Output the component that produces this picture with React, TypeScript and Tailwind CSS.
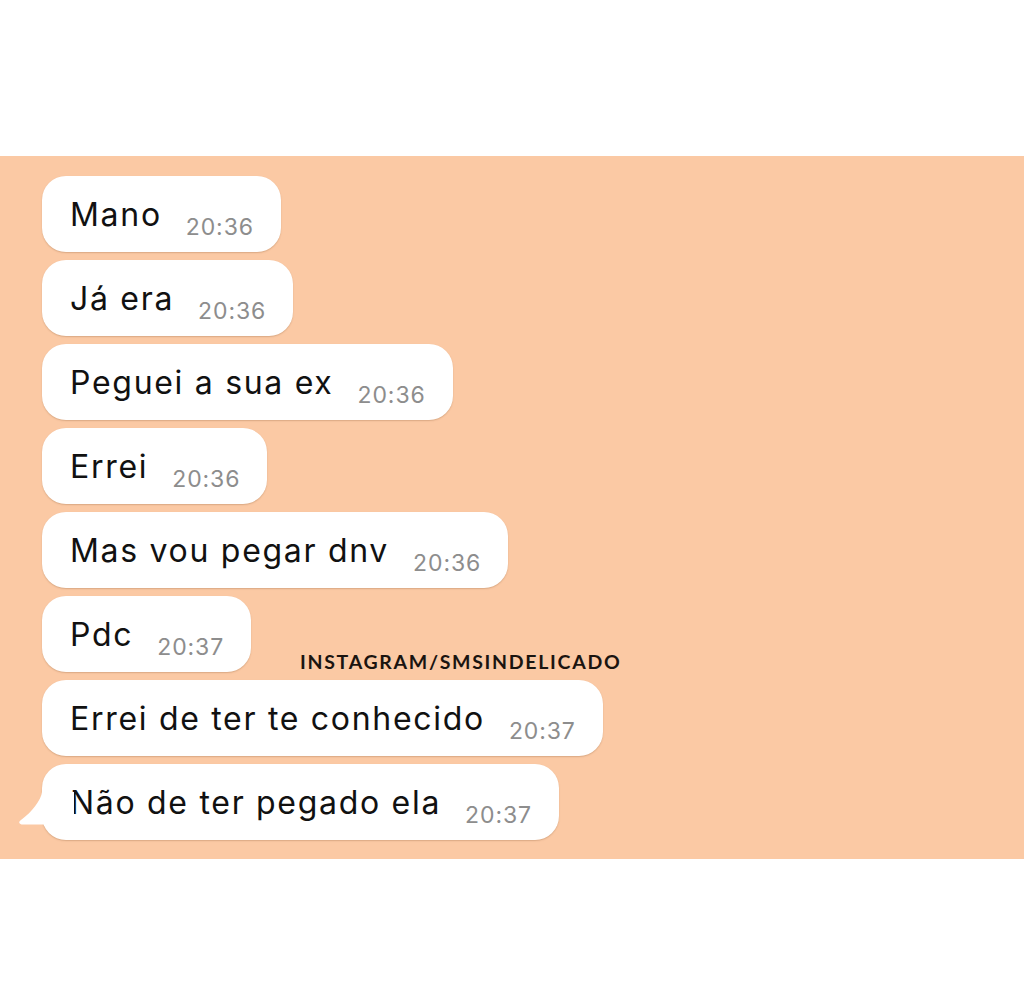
import React from 'react';

type Msg = { text: string; time: string };

const MESSAGES: Msg[] = [
  { text: 'Mano', time: '20:36' },
  { text: 'Já era', time: '20:36' },
  { text: 'Peguei a sua ex', time: '20:36' },
  { text: 'Errei', time: '20:36' },
  { text: 'Mas vou pegar dnv', time: '20:36' },
  { text: 'Pdc', time: '20:37' },
  { text: 'Errei de ter te conhecido', time: '20:37' },
  { text: 'Não de ter pegado ela', time: '20:37' },
];

const Bubble = ({ msg, tail }: { msg: Msg; tail?: boolean }) => (
  <div className="relative self-start">
    <div className="relative flex h-[76px] items-start rounded-[24px] bg-white pl-[28px] pr-[27px] shadow-[0_1px_1.5px_rgba(120,70,30,0.25)]">
      <span className="pt-[23px] text-[32px] leading-[32px] tracking-[1.7px] text-[#111111] whitespace-nowrap">
        {msg.text}
      </span>
      <span className="ml-[24px] pt-[40px] text-[23px] leading-[23px] tracking-[0.9px] text-[#8d8d8d]">
        {msg.time}
      </span>
    </div>
    {/* speech tail on the last bubble */}
    {tail && (
      <svg className="absolute -left-[24px] bottom-0" width="56" height="48" viewBox="0 0 56 48">
        <path
          d="M24 0 C23 8 14 20 3 28 C0 30 1 32.5 5 32.5 L27 32.5 C35 33 40 45 50 48 L56 48 L56 0 Z"
          fill="#ffffff"
        />
      </svg>
    )}
  </div>
);

export default function App() {
  return (
    <div className="h-[981px] w-[1024px] bg-white pt-[156px] font-['Inter','Liberation_Sans',sans-serif]">
      <div className="relative flex h-[703px] flex-col gap-[8px] bg-[#fbc9a4] pl-[42px] pt-[20px]">
        {MESSAGES.map((m, i) => (
          <Bubble key={i} msg={m} tail={i === MESSAGES.length - 1} />
        ))}
        <div className="absolute left-[300px] top-[496px] text-[19.5px] leading-none font-bold tracking-[1.7px] text-[#1a1410] font-['Lato','Open_Sans',sans-serif]">
          INSTAGRAM/SMSINDELICADO
        </div>
      </div>
    </div>
  );
}
